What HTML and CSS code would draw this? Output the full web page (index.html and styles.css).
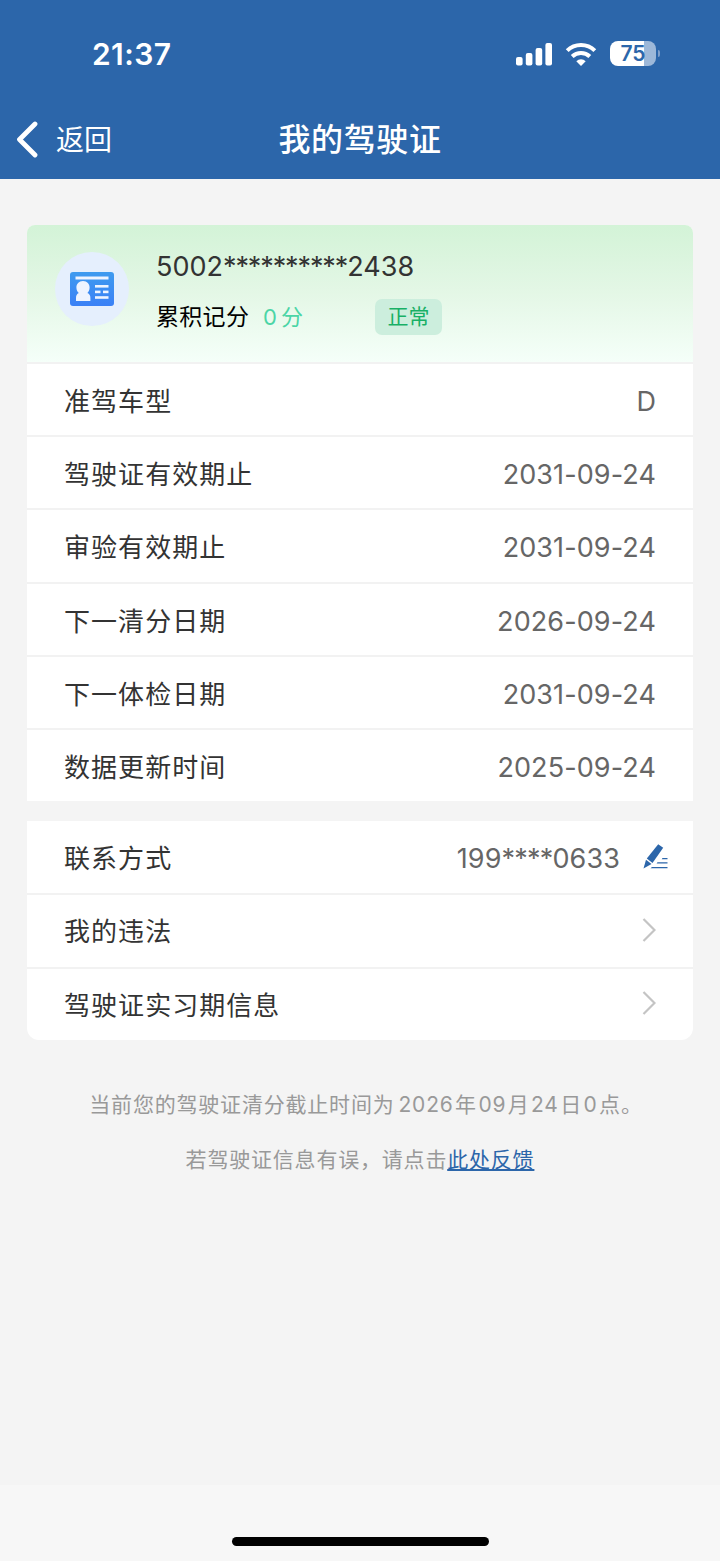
FILE: index.html
```html
<!DOCTYPE html>
<html lang="zh-CN">
<head>
  <meta charset="UTF-8">
  <meta name="viewport" content="width=device-width, initial-scale=1.0">
  <title>我的驾驶证</title>
  <link rel="stylesheet" href="styles.css">
</head>
<body>
  <header class="header">
    <div class="status-bar">
      <span class="time">21:37</span>
      <div class="status-icons">
        <svg class="signal" width="36" height="24" viewBox="0 0 36 24" fill="#fff">
          <rect x="0" y="15" width="6.600" height="8.500" rx="2"/>
          <rect x="9.800" y="11" width="6.600" height="12.500" rx="2"/>
          <rect x="19.600" y="6" width="6.600" height="17.500" rx="2"/>
          <rect x="29.400" y="1" width="6.600" height="22.500" rx="2"/>
        </svg>
        <svg class="wifi" width="32" height="24" viewBox="0 0 32 24" fill="none" stroke="#fff" stroke-width="4">
          <path d="M2.200 8.600a19.600 19.600 0 0 1 27.600 0"/>
          <path d="M7.200 14.500a12.600 12.600 0 0 1 17.600 0"/>
          <path d="M16 24l-4.700-4.800a6.800 6.800 0 0 1 9.400 0z" fill="#fff" stroke="none"/>
        </svg>
        <div class="battery"><span>75</span></div>
        <i class="battery-tip"></i>
      </div>
    </div>
    <nav class="nav">
      <a class="back">
        <svg width="22" height="38" viewBox="0 0 22 38" fill="none" stroke="#fff" stroke-width="4.800" stroke-linecap="round" stroke-linejoin="round">
          <path d="M19 4L3.500 19.500 19 35"/>
        </svg>
        <span>返回</span>
      </a>
      <h1>我的驾驶证</h1>
    </nav>
  </header>

  <main class="content">
    <section class="card">
      <div class="license">
        <div class="avatar">
          <svg width="44" height="34" viewBox="0 0 44 34">
            <defs>
              <linearGradient id="blue" x1="0" y1="0" x2="0" y2="1">
                <stop offset="0" stop-color="#3f9bef"/>
                <stop offset="1" stop-color="#3a80f6"/>
              </linearGradient>
            </defs>
            <rect width="44" height="34" rx="3" fill="url(#blue)"/>
            <g fill="#eef4ff">
              <rect x="5.500" y="4.500" width="33" height="3"/>
              <path d="M13 9c4.200 0 6.600 3 6.600 6.500 0 2.500-1 4.300-2.200 5.500 2.200 1 3 2.500 3 5v3H6v-3c0-2.500.8-4 2.800-5-1.400-1.200-2.400-3-2.400-5.500C6.400 12 8.800 9 13 9z"/>
              <rect x="25" y="13" width="13.500" height="2.600"/>
              <rect x="25" y="18.600" width="5.500" height="2.600"/>
              <rect x="33" y="18.600" width="5.500" height="2.600"/>
              <rect x="25" y="24.200" width="13.500" height="2.600"/>
            </g>
          </svg>
        </div>
        <div class="license-info">
          <div class="license-no">5002<span class="mask">**********</span>2438</div>
          <div class="points">
            <span class="points-label">累积记分</span>
            <span class="points-value">0<b>分</b></span>
            <span class="tag">正常</span>
          </div>
        </div>
      </div>
      <div class="row"><span>准驾车型</span><span class="value">D</span></div>
      <div class="row"><span>驾驶证有效期止</span><span class="value">2031-09-24</span></div>
      <div class="row"><span>审验有效期止</span><span class="value">2031-09-24</span></div>
      <div class="row"><span>下一清分日期</span><span class="value">2026-09-24</span></div>
      <div class="row"><span>下一体检日期</span><span class="value">2031-09-24</span></div>
      <div class="row"><span>数据更新时间</span><span class="value">2025-09-24</span></div>
    </section>

    <section class="card card-links">
      <div class="row contact">
        <span>联系方式</span>
        <span class="value">199<span class="mask">****</span>0633</span>
        <svg class="edit" width="26" height="26" viewBox="0 0 26 26" fill="#2c66aa">
          <path d="M16.200 0.300l5 3.500L10.500 18.900l-5.700-4.300z"/>
          <path d="M4 15.700l5.500 4.200L1.500 24.500z"/>
          <path d="M20.500 14H25.500v1.300h-5.800zM15.500 18.300H25.500v1.300H14.600zM10 23H25.500v1.300H8.500z"/>
        </svg>
      </div>
      <div class="row">
        <span>我的违法</span>
        <svg class="arrow" width="14" height="24" viewBox="0 0 14 24"><path d="M1.500 1L12.500 12 1.500 23"/></svg>
      </div>
      <div class="row">
        <span>驾驶证实习期信息</span>
        <svg class="arrow" width="14" height="24" viewBox="0 0 14 24"><path d="M1.500 1L12.500 12 1.500 23"/></svg>
      </div>
    </section>

    <div class="tips">
      <p class="tip-date">当前您的驾驶证清分截止时间为<i class="year">2026</i>年<i>09</i>月<i>24</i>日<i>0</i>点。</p>
      <p>若驾驶证信息有误，请点击<a>此处反馈</a></p>
    </div>
  </main>

  <footer class="home-area"><div class="home-bar"></div></footer>
</body>
</html>
```

FILE: styles.css
```css
* {
  box-sizing: border-box;
}

body {
  margin: 0;
  min-height: 1561px;
  display: flex;
  flex-direction: column;
  background: #f4f4f4;
  color: #333;
  font-family: Inter, "Noto Sans CJK SC", sans-serif;
}

.header {
  height: 179px;
  background: #2c66aa;
  color: #fff;
}

.status-bar {
  height: 99px;
  padding: 8px 60px 0 92px;
  display: flex;
  align-items: center;
  justify-content: space-between;
}

.time {
  font-size: 30px;
  font-weight: 600;
  letter-spacing: 0.4px;
}

.status-icons {
  display: flex;
  align-items: center;
}

.wifi {
  margin: 0 13px 0 13px;
}

.battery {
  width: 46px;
  height: 25px;
  border-radius: 8px;
  background: linear-gradient(to right, #fff 75%, #9db8d9 75%);
  color: #2c66aa;
  font-size: 21px;
  font-weight: 600;
  line-height: 25px;
  text-align: center;
}

.battery-tip {
  width: 2px;
  height: 7px;
  margin-left: 2px;
  border-radius: 0 3px 3px 0;
  background: #7f9fca;
}

.nav {
  height: 80px;
  padding: 0 16px;
  display: grid;
  grid-template-columns: 1fr auto 1fr;
  align-items: center;
}

.back {
  display: flex;
  align-items: center;
  gap: 18px;
  font-size: 28px;
}

.back span {
  padding-bottom: 2px;
}

.nav h1 {
  margin: 0;
  padding-bottom: 4px;
  font-size: 32px;
  font-weight: 500;
  letter-spacing: 0.6px;
}

.content {
  flex: 1;
  padding: 46px 27px 0;
}

.card {
  border-radius: 8px 8px 0 0;
  background: #fff;
  overflow: hidden;
}

.card-links {
  margin-top: 20px;
  border-radius: 0 0 12px 12px;
}

.license {
  height: 137px;
  padding: 0 28px;
  display: flex;
  gap: 27px;
  background: linear-gradient(#d3f3d7, #e4f7e6 50%, #f5fff9);
}

.avatar {
  width: 74px;
  height: 74px;
  margin-top: 27px;
  border-radius: 50%;
  display: flex;
  align-items: center;
  justify-content: center;
  background: #e5effd;
}

.license-info {
  padding-top: 25px;
}

.license-no {
  font-size: 27px;
  line-height: 34px;
}

.mask {
  letter-spacing: -1.1px;
}

.points {
  height: 37px;
  margin-top: 14px;
  display: flex;
  align-items: center;
}

.points-label {
  width: 107px;
  padding-bottom: 3px;
  color: #000;
  font-size: 23px;
  letter-spacing: 0.3px;
}

.points-value {
  width: 112px;
  padding-bottom: 3px;
  color: #4bd5a6;
  font-size: 22px;
}

.points-value b {
  margin-left: 4px;
  font-weight: 400;
}

.tag {
  width: 67px;
  height: 36px;
  border-radius: 7px;
  background: #cceedd;
  color: #18b066;
  font-size: 21px;
  line-height: 36px;
  text-align: center;
}

.row {
  height: 73.2px;
  padding: 0 37px;
  display: flex;
  align-items: center;
  justify-content: space-between;
  border-top: 2px solid #f2f2f2;
  font-size: 26px;
  letter-spacing: 1.05px;
}

.card-links .row {
  padding-bottom: 2px;
}

.card-links .row:first-child {
  height: 72.2px;
  border-top: 0;
}

.value {
  padding-top: 4px;
  color: #666;
  font-size: 27px;
  letter-spacing: 0.1px;
}

.card-links .contact {
  padding-right: 25px;
}

.contact .value {
  margin-left: auto;
  margin-right: 22px;
}

.contact .mask {
  letter-spacing: -0.8px;
}

.edit {
  margin-top: 2px;
}

.arrow {
  fill: none;
  stroke: #c4c4c4;
  stroke-width: 2.2;
}

.tips {
  padding-top: 37px;
  color: #999;
  font-size: 21px;
  letter-spacing: 0.8px;
  text-align: center;
}

.tips p {
  margin: 0;
  height: 55px;
  line-height: 55px;
  white-space: nowrap;
}

/* the closing full stop leaves half an em of blank on the right */
.tips .tip-date {
  padding-left: 12px;
}

.tips i {
  margin: 0 1.5px;
  font-style: normal;
}

.tips .year {
  margin-left: 4px;
}

.tips a {
  color: #2c66aa;
  text-decoration: underline;
}

.home-area {
  height: 76px;
  padding-top: 52px;
  background: #f7f7f7;
}

.home-bar {
  width: 257px;
  height: 9px;
  margin: 0 auto;
  border-radius: 5px;
  background: #000;
}
```
